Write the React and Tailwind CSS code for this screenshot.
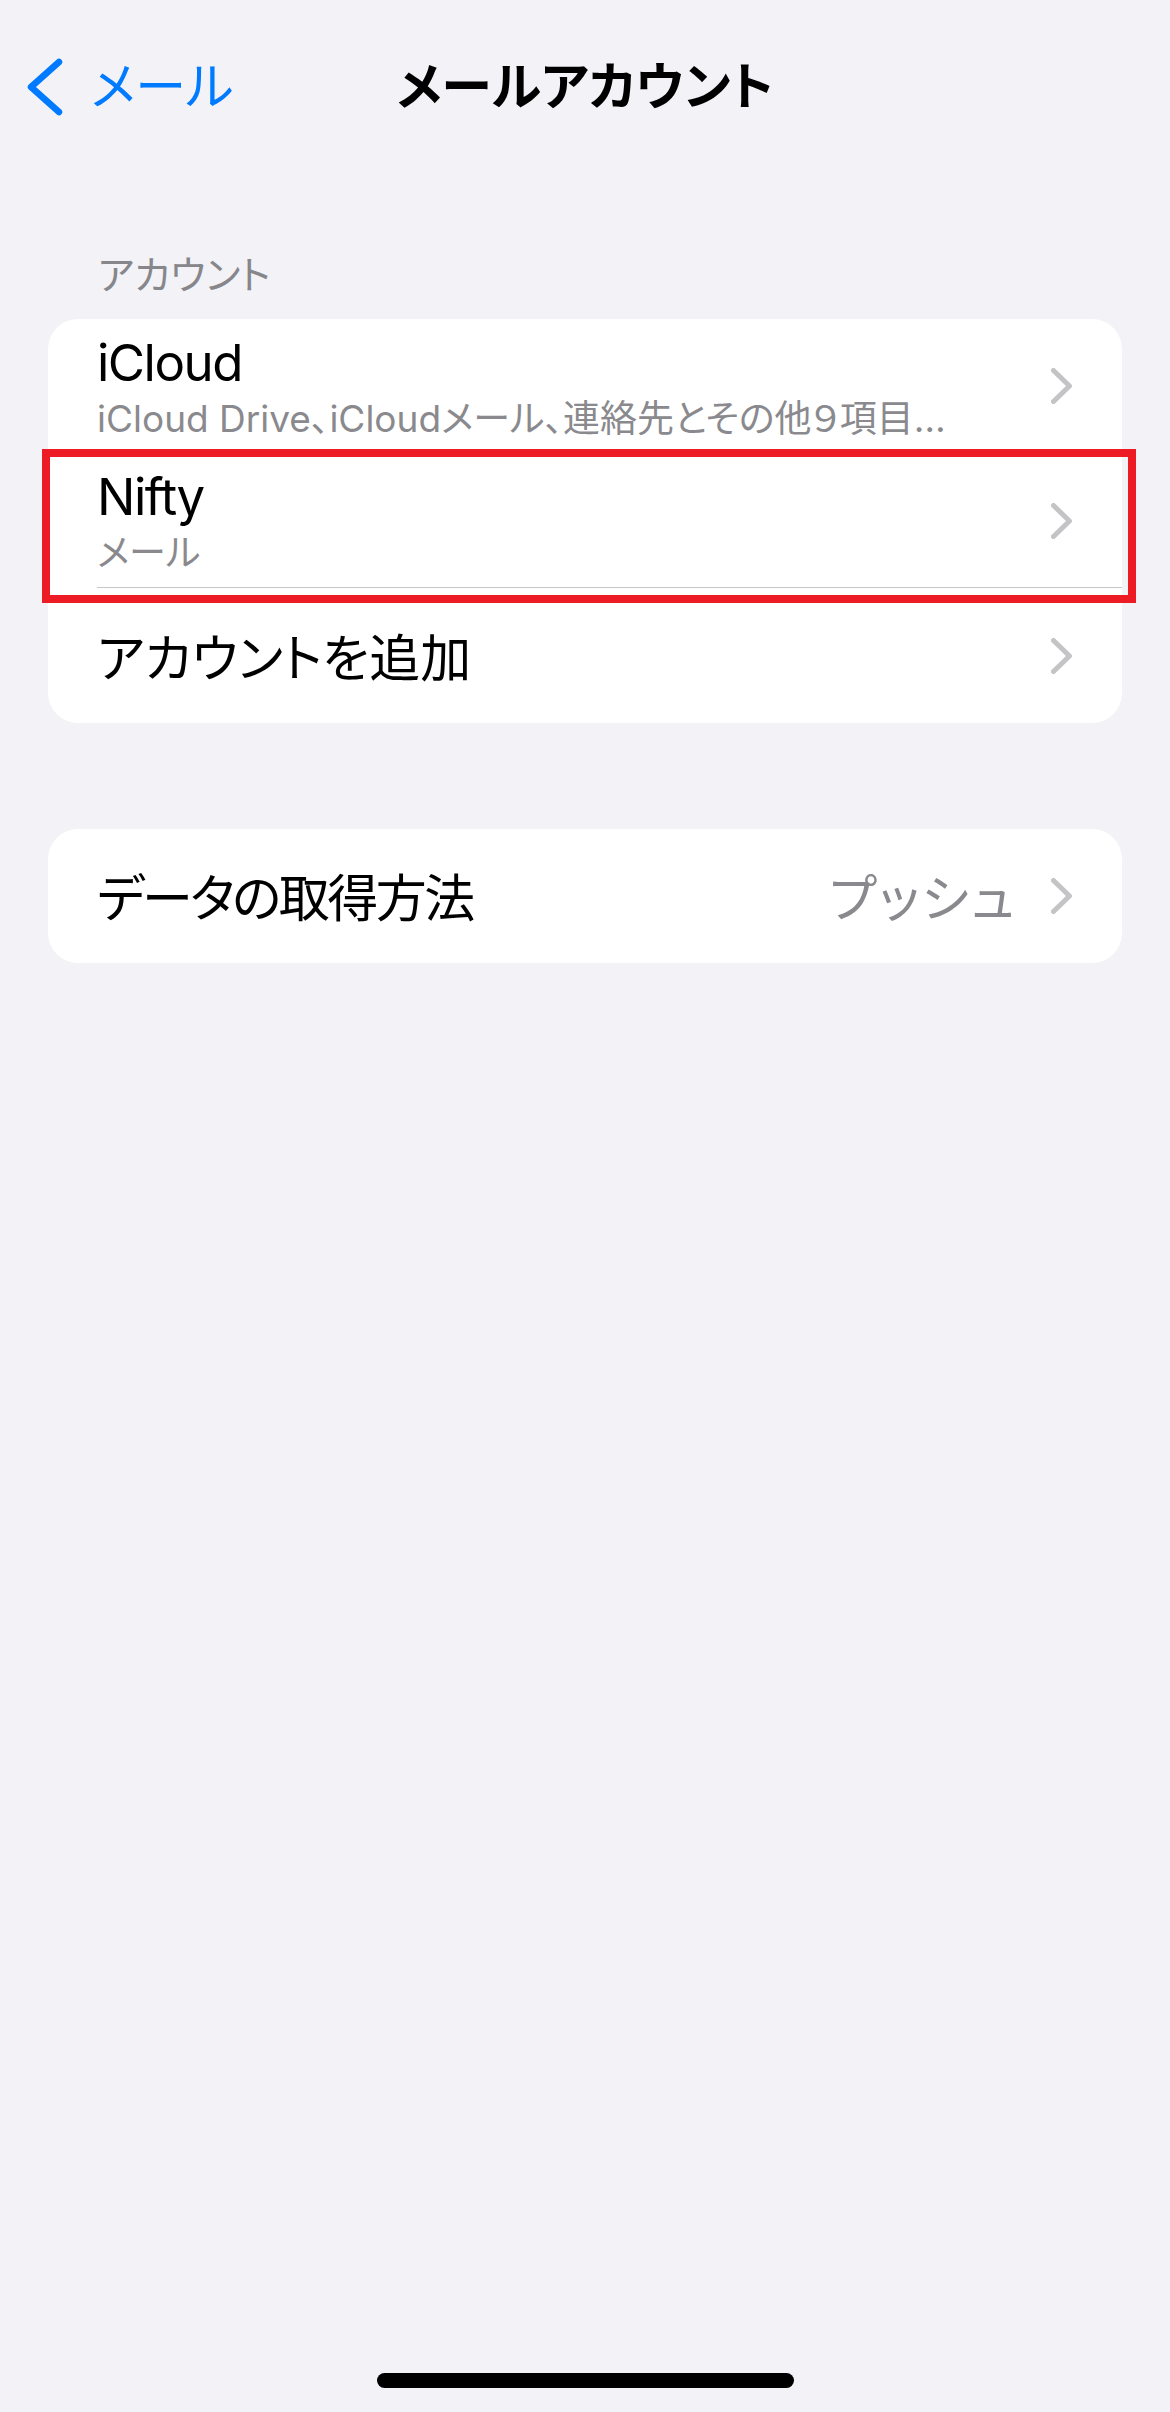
import React from "react";

const Chevron = () => (
  <svg width="22" height="36" viewBox="0 0 22 36" fill="none" className="shrink-0">
    <path
      d="M2.5 2.5 L18.5 18 L2.5 33.5"
      stroke="#c4c4c7"
      strokeWidth="5"
      strokeLinecap="round"
      strokeLinejoin="round"
    />
  </svg>
);

const BackChevron = () => (
  <svg width="36" height="58" viewBox="0 0 36 58" fill="none" className="shrink-0">
    <path
      d="M32 4 L4 29 L32 54"
      stroke="#007aff"
      strokeWidth="6.5"
      strokeLinecap="round"
      strokeLinejoin="round"
    />
  </svg>
);

function TwoLineRow({ title, subtitle, height }) {
  return (
    <div className={`flex pl-[49px] ${height}`}>
      <div className="flex flex-1 items-center justify-between border-b border-[#c6c6c8] pr-[49px]">
        <div className="flex flex-col pt-[5px]">
          <div className="text-[51px] leading-[60px] tracking-[-1.5px] text-black">{title}</div>
          <div className="text-[37px] leading-[52px] text-[#8a8a8e] whitespace-nowrap">{subtitle}</div>
        </div>
        <Chevron />
      </div>
    </div>
  );
}

export default function App() {
  return (
    <div className="w-[1170px] h-[2412px] bg-[#f2f2f7] flex flex-col [font-family:Inter,'Noto_Sans_CJK_JP',sans-serif] [font-feature-settings:'palt']">
      {/* Navigation bar */}
      <div className="mt-[43px] h-[88px] grid grid-cols-[1fr_auto_1fr] items-center">
        <div className="flex items-center pl-[27px]">
          <BackChevron />
          <span className="ml-[28px] text-[51px] leading-[60px] text-[#007aff]">メール</span>
        </div>
        <div className="text-[51px] leading-[60px] font-bold text-black">メールアカウント</div>
        <div />
      </div>

      {/* Section header */}
      <div className="mt-[124px] pl-[98px] text-[39px] leading-[39px] text-[#86868b]">アカウント</div>

      {/* Accounts card */}
      <div className="relative mt-[25px] mx-[48px] bg-white rounded-[30px] flex flex-col">
        <TwoLineRow
          title="iCloud"
          subtitle="iCloud Drive、iCloudメール、連絡先とその他９項目…"
          height="h-[135px]"
        />
        <TwoLineRow title="Nifty" subtitle="メール" height="h-[134px]" />
        <div className="flex h-[135px] pl-[49px]">
          <div className="flex flex-1 items-center justify-between pr-[49px]">
            <div className="pt-[6px] text-[51px] leading-[60px] text-black">アカウントを追加</div>
            <Chevron />
          </div>
        </div>

        {/* Highlight box */}
        <div className="absolute left-[-6px] top-[130px] w-[1094px] h-[154px] border-[8px] border-[#ed1c24] pointer-events-none" />
      </div>

      {/* Fetch method card */}
      <div className="mt-[106px] mx-[48px] bg-white rounded-[30px] h-[134px] flex pl-[49px]">
        <div className="flex flex-1 items-center justify-between pr-[49px]">
          <div className="pt-[6px] text-[51px] leading-[60px] tracking-[-2.5px] text-black">データの取得方法</div>
          <div className="flex items-center gap-[34px]">
            <span className="pt-[6px] text-[51px] leading-[60px] tracking-[2.5px] text-[#8a8a8e]">プッシュ</span>
            <Chevron />
          </div>
        </div>
      </div>

      <div className="flex-1" />

      {/* Home indicator */}
      <div className="mx-auto mb-[24px] w-[417px] h-[15px] rounded-full bg-black" />
    </div>
  );
}
